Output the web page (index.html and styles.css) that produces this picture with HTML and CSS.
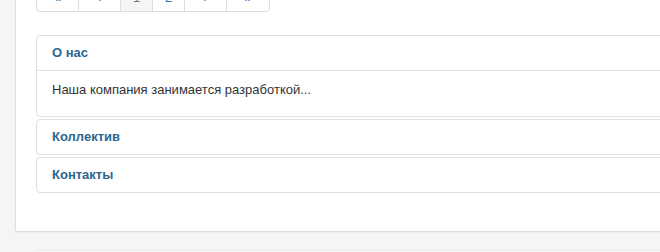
FILE: index.html
```html
<!DOCTYPE html>
<html lang="ru">
<head>
<meta charset="UTF-8">
<title>О компании</title>
<link rel="stylesheet" href="styles.css">
</head>
<body>

<!-- основная карточка -->
<div class="card">
  <ul class="pager">
    <li><a href="#">«</a></li>
    <li><a href="#">‹</a></li>
    <li class="active"><span>1</span></li>
    <li><a href="#">2</a></li>
    <li><a href="#">›</a></li>
    <li><a href="#">»</a></li>
  </ul>

  <div class="panel-group">
    <div class="panel">
      <div class="panel-heading">О нас</div>
      <div class="panel-body">Наша компания занимается разработкой...</div>
    </div>
    <div class="panel">
      <div class="panel-heading">Коллектив</div>
    </div>
    <div class="panel">
      <div class="panel-heading">Контакты</div>
    </div>
  </div>
</div>

<!-- следующий блок -->
<div class="next-block"></div>

</body>
</html>
```

FILE: styles.css
```css
body {
  margin: 0;
  background-color: #f4f5f7;
  font-family: "Liberation Sans", Arial, sans-serif;
  font-size: 13px;
  color: #333;
  overflow: hidden;
}

.card {
  margin: -60px 0 0 15px;
  width: 700px;
  padding: 36px 20px 38px;
  background-color: #fff;
  border: 1px solid #dedede;
  border-radius: 3px;
  box-shadow: 0 1px 1px rgba(0, 0, 0, 0.04);
}

/* пагинация */
.pager {
  display: inline-flex;
  list-style: none;
  margin: 0 0 23px;
  padding: 0;
  border: 1px solid #ddd;
  border-radius: 4px;
}

.pager li a,
.pager li span {
  display: block;
  height: 33px;
  line-height: 20px;
  padding: 10px 0 0; /* видны только нижние края символов */
  box-sizing: border-box;
  width: 42px;
  text-align: center;
  color: #337ab7;
  text-decoration: none;
  border-left: 1px solid #ddd;
}

.pager li:first-child a {
  width: 41px;
  border-left: 0;
}

.pager li.active span {
  width: 32px;
  background-color: #f5f5f5;
  color: #777;
}

.pager li:nth-child(4) a {
  width: 32px;
}

.pager li:last-child a {
  width: 43px;
}

/* аккордеон */
.panel-group {
  display: flex;
  flex-direction: column;
  gap: 2px;
}

.panel {
  border: 1px solid #e0e0e0;
  border-radius: 4px;
}

.panel-heading {
  height: 34px;
  line-height: 34px;
  padding: 0 15px;
  font-weight: bold;
  color: #2c6690;
}

.panel-body {
  border-top: 1px solid #e3e3e3;
  height: 46px;
  padding: 10px 15px 0;
  box-sizing: border-box;
  line-height: 17px;
}

.next-block {
  margin: 18px 0 0 36px;
  height: 40px;
  background-color: #f9f9fa;
  border-top: 1px solid #eaebed;
}
```
